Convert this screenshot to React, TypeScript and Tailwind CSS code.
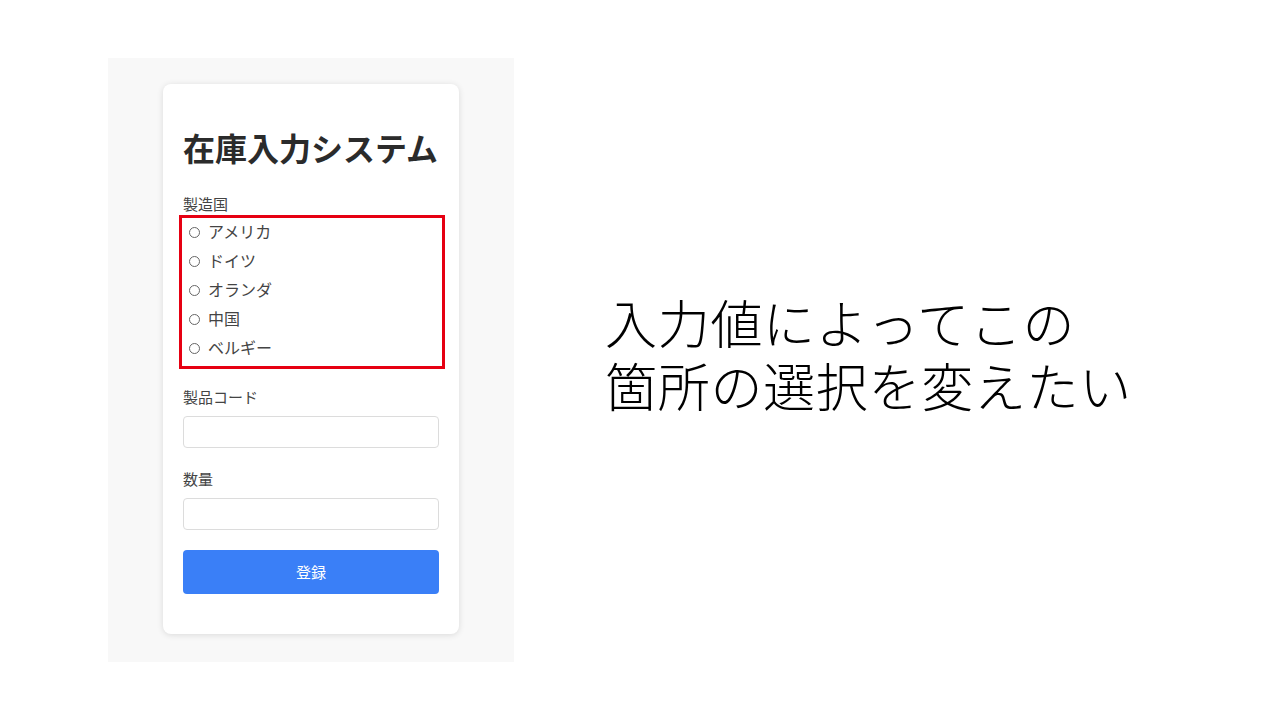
import React from 'react';

const countries = ['アメリカ', 'ドイツ', 'オランダ', '中国', 'ベルギー'];

const App: React.FC = () => {
  return (
    <div
      className="flex items-start w-[1280px] h-[720px] bg-white overflow-hidden"
      style={{ fontFamily: '"Noto Sans CJK JP", "Noto Sans", sans-serif' }}
    >
      <div className="ml-[108px] mt-[58px] w-[406px] h-[604px] bg-[#f8f8f8] pl-[55px] pt-[26px]">
        <div className="w-[296px] h-[550px] bg-white rounded-lg shadow-[0_1px_6px_rgba(0,0,0,0.12)] px-5 pt-[44px]">
          <h1 className="text-[32px] leading-[38px] font-bold text-[#2b2b2b] whitespace-nowrap">在庫入力システム</h1>

          <div className="mt-[28px] text-[15px] leading-5 text-[#444]">製造国</div>
          <div className="-ml-1 mt-px w-[266px] h-[154px] border-[3px] border-[#e60012]">
            {countries.map((c) => (
              <label key={c} className="flex items-center h-[29px] pl-[7px] gap-2 text-[16px] leading-5 text-[#444]">
                <span className="w-[11px] h-[11px] rounded-full border border-[#666] bg-white" />
                <span className="pb-[3px]">{c}</span>
              </label>
            ))}
          </div>

          <div className="mt-[18px] text-[15px] leading-5 text-[#444]">製品コード</div>
          <input className="mt-[9px] w-full h-8 border border-[#dcdcdc] rounded bg-white outline-none" />

          <div className="mt-[21px] text-[15px] leading-5 text-[#444]">数量</div>
          <input className="mt-[9px] w-full h-8 border border-[#dcdcdc] rounded bg-white outline-none" />

          <button className="mt-5 w-full h-11 bg-[#3a7ff7] text-white text-[15px] rounded">登録</button>
        </div>
      </div>

      <div className="ml-[91px] mt-[290px] text-[52px] leading-[63px] font-light text-black whitespace-nowrap tracking-[0.7px]">
        <div>入力値によってこの</div>
        <div>箇所の選択を変えたい</div>
      </div>
    </div>
  );
};

export default App;
